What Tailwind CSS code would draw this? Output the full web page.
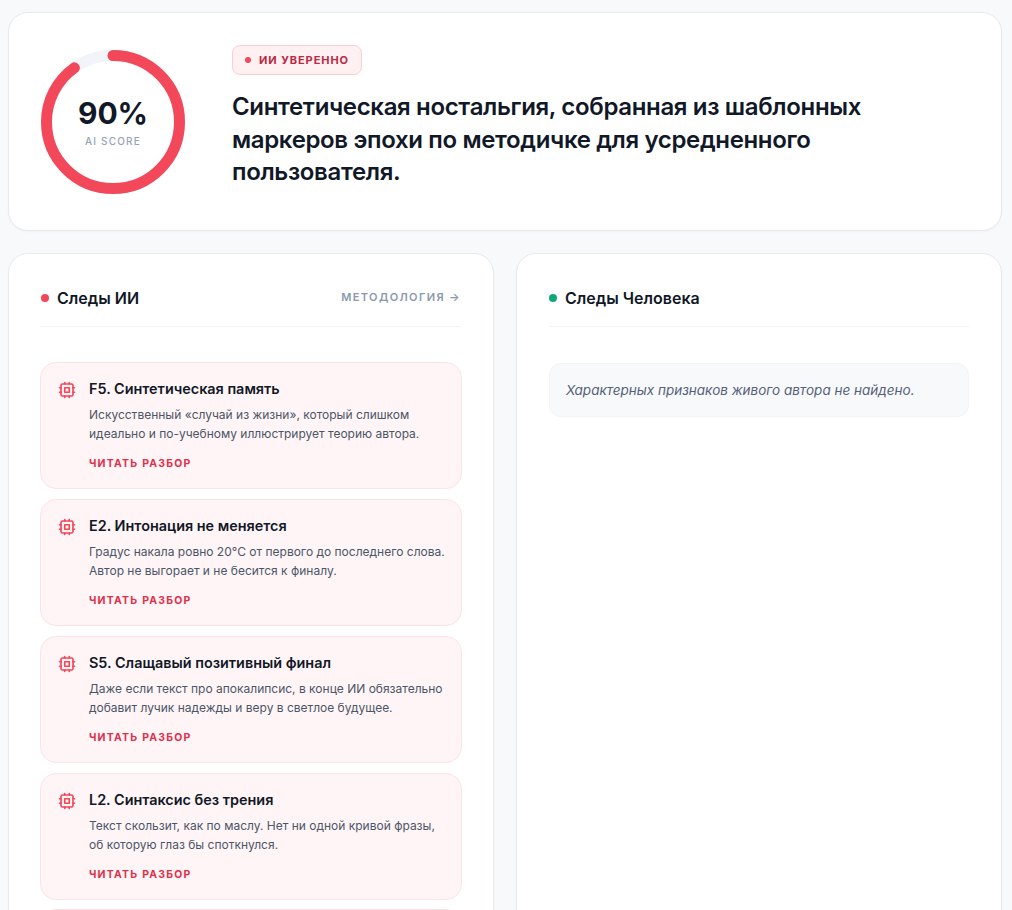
<!DOCTYPE html>
<html lang="ru">
<head>
  <meta charset="UTF-8" />
  <meta name="viewport" content="width=device-width, initial-scale=1.0"/>
  <title>AI Score</title>
  <script src="https://cdn.jsdelivr.net/npm/@tailwindcss/browser@4"></script>
</head>
<body class="bg-[#f7f9fb] text-[#111827] font-['Inter',sans-serif]">
<div id="page" class="h-[910px] overflow-hidden px-2 pt-3 pr-[10px]">

  <!-- Score card -->
  <section class="flex gap-[47px] items-center bg-white border border-[#e6eaf0] rounded-[20px] p-8 shadow-[0_1px_2px_rgba(0,0,0,0.03)] h-[219px]">
    <div class="relative w-36 h-36 shrink-0">
      <svg class="w-36 h-36 -rotate-90" viewBox="0 0 144 144">
        <circle cx="72" cy="72" r="66.5" fill="none" stroke="#f1f4f8" stroke-width="11"/>
        <circle cx="72" cy="72" r="66.5" fill="none" stroke="#f2485a" stroke-width="11" stroke-linecap="round" stroke-dasharray="376 417.8"/>
      </svg>
      <div class="absolute inset-0 flex flex-col items-center justify-center">
        <span class="text-[30px] leading-9 font-bold">90%</span>
        <span class="text-[10px] leading-4 mt-[2px] font-medium tracking-[0.12em] text-[#94a3b8]">AI SCORE</span>
      </div>
    </div>
    <div class="flex-1 self-start">
      <div class="inline-flex items-center gap-2 h-[30px] px-3 rounded-lg bg-[#fff1f2] border border-[#fecdd3]">
        <span class="w-1.5 h-1.5 rounded-full bg-[#f2485a]"></span>
        <span class="text-[11px] font-bold tracking-[0.085em] text-[#b92a45]">ИИ УВЕРЕННО</span>
      </div>
      <h1 class="mt-4 max-w-2xl text-2xl leading-[32.5px] tracking-[-0.35px] font-semibold">Синтетическая ностальгия, собранная из шаблонных маркеров эпохи по методичке для усредненного пользователя.</h1>
    </div>
  </section>

  <div class="grid grid-cols-2 gap-[22px] mt-[22px]">

    <!-- AI traces -->
    <section class="bg-white border border-[#e6eaf0] rounded-[20px] pl-[31px] pr-8 pt-[27px] pb-8 shadow-[0_1px_2px_rgba(0,0,0,0.03)]">
      <div class="flex items-center justify-between h-[46px] pb-[12px] border-b border-[#f1f4f8]">
        <h2 class="flex items-center gap-2 pl-px text-base font-semibold"><span class="w-2 h-2 rounded-full bg-[#f2485a]"></span>Следы ИИ</h2>
        <span class="text-[11px] font-semibold tracking-[0.125em] text-[#8a99ae]">МЕТОДОЛОГИЯ →</span>
      </div>
      <div class="mt-[35px] -mr-px flex flex-col gap-[10px]">

        <article class="flex gap-[13px] h-[127px] pl-[17px] pr-[13px] pt-4 bg-[#fff5f6] border border-[#fde3e6] rounded-2xl">
          <svg class="w-[18px] h-[18px] mt-[2px] shrink-0" viewBox="0 0 24 24" fill="none" stroke="#f2485a" stroke-width="2.2" stroke-linecap="round" stroke-linejoin="round"><rect x="4" y="4" width="16" height="16" rx="2"/><rect x="9" y="9" width="6" height="6"/><path d="M15 2v2M15 20v2M2 15h2M2 9h2M20 15h2M20 9h2M9 2v2M9 20v2"/></svg>
          <div>
            <h3 class="text-[14.4px] leading-5 font-semibold">F5. Синтетическая память</h3>
            <p class="mt-[5.5px] text-xs leading-[19.5px] text-[#4b5568]">Искусственный «случай из жизни», который слишком идеально и по-учебному иллюстрирует теорию автора.</p>
            <span class="block mt-[12.5px] text-[10.4px] leading-4 font-bold tracking-[0.12em] text-[#e0304b]">ЧИТАТЬ РАЗБОР</span>
          </div>
        </article>

        <article class="flex gap-[13px] h-[127px] pl-[17px] pr-[13px] pt-4 bg-[#fff5f6] border border-[#fde3e6] rounded-2xl">
          <svg class="w-[18px] h-[18px] mt-[2px] shrink-0" viewBox="0 0 24 24" fill="none" stroke="#f2485a" stroke-width="2.2" stroke-linecap="round" stroke-linejoin="round"><rect x="4" y="4" width="16" height="16" rx="2"/><rect x="9" y="9" width="6" height="6"/><path d="M15 2v2M15 20v2M2 15h2M2 9h2M20 15h2M20 9h2M9 2v2M9 20v2"/></svg>
          <div>
            <h3 class="text-[14.4px] leading-5 font-semibold">E2. Интонация не меняется</h3>
            <p class="mt-[5.5px] text-xs leading-[19.5px] text-[#4b5568]">Градус накала ровно 20°C от первого до последнего слова. Автор не выгорает и не бесится к финалу.</p>
            <span class="block mt-[12.5px] text-[10.4px] leading-4 font-bold tracking-[0.12em] text-[#e0304b]">ЧИТАТЬ РАЗБОР</span>
          </div>
        </article>

        <article class="flex gap-[13px] h-[127px] pl-[17px] pr-[13px] pt-4 bg-[#fff5f6] border border-[#fde3e6] rounded-2xl">
          <svg class="w-[18px] h-[18px] mt-[2px] shrink-0" viewBox="0 0 24 24" fill="none" stroke="#f2485a" stroke-width="2.2" stroke-linecap="round" stroke-linejoin="round"><rect x="4" y="4" width="16" height="16" rx="2"/><rect x="9" y="9" width="6" height="6"/><path d="M15 2v2M15 20v2M2 15h2M2 9h2M20 15h2M20 9h2M9 2v2M9 20v2"/></svg>
          <div>
            <h3 class="text-[14.4px] leading-5 font-semibold">S5. Слащавый позитивный финал</h3>
            <p class="mt-[5.5px] text-xs leading-[19.5px] text-[#4b5568]">Даже если текст про апокалипсис, в конце ИИ обязательно добавит лучик надежды и веру в светлое будущее.</p>
            <span class="block mt-[12.5px] text-[10.4px] leading-4 font-bold tracking-[0.12em] text-[#e0304b]">ЧИТАТЬ РАЗБОР</span>
          </div>
        </article>

        <article class="flex gap-[13px] h-[127px] pl-[17px] pr-[13px] pt-4 bg-[#fff5f6] border border-[#fde3e6] rounded-2xl">
          <svg class="w-[18px] h-[18px] mt-[2px] shrink-0" viewBox="0 0 24 24" fill="none" stroke="#f2485a" stroke-width="2.2" stroke-linecap="round" stroke-linejoin="round"><rect x="4" y="4" width="16" height="16" rx="2"/><rect x="9" y="9" width="6" height="6"/><path d="M15 2v2M15 20v2M2 15h2M2 9h2M20 15h2M20 9h2M9 2v2M9 20v2"/></svg>
          <div>
            <h3 class="text-[14.4px] leading-5 font-semibold">L2. Синтаксис без трения</h3>
            <p class="mt-[5.5px] text-xs leading-[19.5px] text-[#4b5568]">Текст скользит, как по маслу. Нет ни одной кривой фразы, об которую глаз бы споткнулся.</p>
            <span class="block mt-[12.5px] text-[10.4px] leading-4 font-bold tracking-[0.12em] text-[#e0304b]">ЧИТАТЬ РАЗБОР</span>
          </div>
        </article>

        <article class="h-[127px] -mt-px bg-[#fff5f6] border border-[#fde3e6] rounded-2xl"></article>
      </div>
    </section>

    <!-- Human traces -->
    <section class="bg-white border border-[#e6eaf0] rounded-[20px] p-8 pt-[27px] shadow-[0_1px_2px_rgba(0,0,0,0.03)]">
      <div class="flex items-center h-[46px] pb-[12px] border-b border-[#f1f4f8]">
        <h2 class="flex items-center gap-2 text-base font-semibold"><span class="w-2 h-2 rounded-full bg-[#10a878]"></span>Следы Человека</h2>
      </div>
      <div class="mt-9 h-[54px] flex items-center px-4 bg-[#f7f9fb] border border-[#f1f4f8] rounded-xl">
        <p class="text-[13.5px] italic text-[#55617a]">Характерных признаков живого автора не найдено.</p>
      </div>
    </section>

  </div>
</div>
</body>
</html>
